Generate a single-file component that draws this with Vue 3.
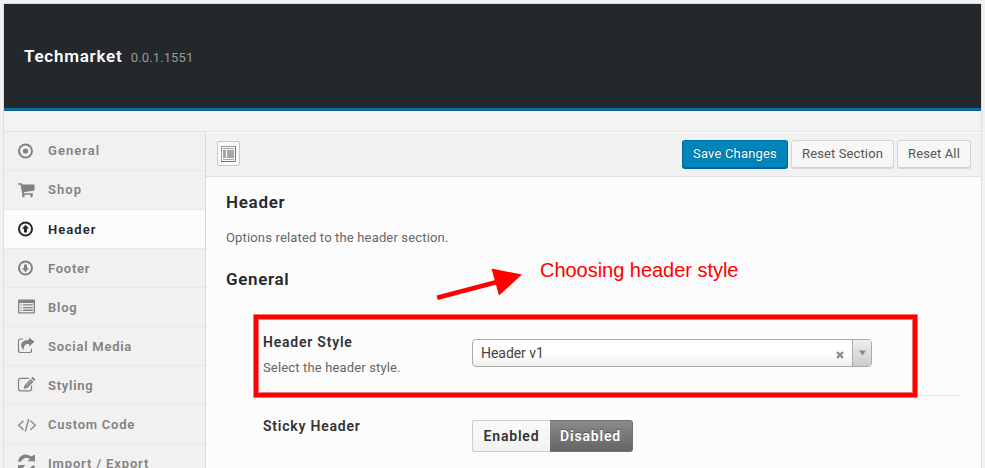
<script setup>
import { ref } from 'vue'

const items = ['General', 'Shop', 'Header', 'Footer', 'Blog', 'Social Media', 'Styling', 'Custom Code', 'Import / Export']
const active = ref('Header')
const sticky = ref(false)
</script>

<template>
  <div class="page">
    <div class="panel">
      <header class="top">
        <h2>Techmarket</h2>
        <span class="version">0.0.1.1551</span>
      </header>
      <div class="strip"></div>
      <div class="body">
        <nav class="sidebar">
          <a v-for="item in items" :key="item" class="item" :class="{ active: item === active }" @click="active = item">
            <svg class="icon" viewBox="0 0 20 20" width="20" height="20" fill="currentColor">
              <g v-if="item === 'General'">
                <circle cx="9.5" cy="10" r="6.5" fill="none" stroke="currentColor" stroke-width="2" />
                <circle cx="9.5" cy="10" r="2.6" />
              </g>
              <g v-else-if="item === 'Shop'">
                <path d="M2 3.3h3.8l.6 1.3h12.1v6L7.8 12.2l.3 1H17v1.4h-.4v2.6h-2.1v-2.4H8.500v2.4H6.3v-2.7L4.6 4.700H2z" />
              </g>
              <g v-else-if="item === 'Header'">
                <circle cx="9.5" cy="10" r="6.5" fill="none" stroke="currentColor" stroke-width="2" />
                <path d="M9.500 5.800l3.500 4h-2v3.700H8V9.800H6z" />
              </g>
              <g v-else-if="item === 'Footer'">
                <circle cx="9.5" cy="10" r="6.5" fill="none" stroke="currentColor" stroke-width="2" />
                <path d="M9.500 14.200l-3.500-4h2V6.500h3v3.700h2z" />
              </g>
              <g v-else-if="item === 'Blog'">
                <path fill-rule="evenodd" d="M3 2.500h15q1 0 1 1v12q0 1-1 1H3q-1 0-1-1v-12q0-1 1-1zM3.300 6v9.200h14.400V6z" />
                <path d="M4.500 7.200h1.200v1.300H4.500zM7 7.200h9.800v1.300H7zM4.500 9.900h1.200v1.300H4.500zM7 9.900h9.800v1.300H7zM4.500 12.600h1.200v1.300H4.500zM7 12.600h9.800v1.300H7z" />
              </g>
              <g v-else-if="item === 'Social Media'">
                <path d="M7 3H4.500Q2.500 3 2.500 5v9.500q0 2 2 2h9q2 0 2-2V12.500" fill="none" stroke="currentColor" stroke-width="1.200" />
                <path d="M13 1.500l5.500 4.300-5.500 4.600V7.900C9.500 7.800 7.500 9 7.600 14.300 2.500 8.500 6 3.800 13 4z" />
              </g>
              <g v-else-if="item === 'Styling'">
                <path d="M13 3.300H4.500q-2 0-2 2v8.500q0 2 2 2h9q2 0 2-2v-3.300" fill="none" stroke="currentColor" stroke-width="1.200" />
                <path d="M16.500 1.800l3 2.800-1.300 1.500-3-2.800zM14.500 4l3 2.800-6.300 6.200-3.500 1 .9-3.700z" />
                <path d="M10 10.800l5.300-5.300" stroke="#f1f1f1" stroke-width=".6" />
              </g>
              <g v-else-if="item === 'Custom Code'" fill="none" stroke="currentColor" stroke-width="1.300">
                <path d="M7.500 5.800L2.700 10.300l4.800 4.500M14.500 5.800l4.800 4.500-4.800 4.500M12.700 4L9.300 16.500" />
              </g>
              <g v-else>
                <path d="M2 7.700C3 2.900 6 .5 9.800 .5q3 0 5.200 2L19 .5v6.700h-7.500L14 5Q8.500 1.700 5 7.700z" />
                <path d="M19 11.800c-1 4.300-4 6.300-7.800 6.300q-3 0-5-1.700L2 18.500V11h7.500L7 13.500q5.500 4 9-1.700z" />
              </g>
            </svg>
            <span class="label">{{ item }}</span>
          </a>
        </nav>
        <main class="main">
          <div class="bar">
            <button class="expand" aria-label="Expand">
              <svg viewBox="0 0 15 16" width="15" height="16">
                <path d="M.5 16V.5H15" fill="none" stroke="#999" />
                <path d="M0 15.500h14.500V0" fill="none" stroke="#777" />
                <path d="M2 2h11v1H2zM2 4h3v8H2zM6 4h7v8H6zM2 13h11v1H2z" fill="#a7a7a7" />
              </svg>
            </button>
            <button class="btn primary">Save Changes</button>
            <button class="btn">Reset Section</button>
            <button class="btn">Reset All</button>
          </div>
          <section class="content">
            <h2 class="title">Header</h2>
            <p class="desc">Options related to the header section.</p>
            <h3 class="title general">General</h3>
            <div class="row first">
              <div class="field">
                <div class="name">Header Style</div>
                <div class="hint">Select the header style.</div>
              </div>
              <div class="select">
                <span class="value">Header v1</span>
                <svg class="clear" viewBox="0 0 8 8" width="8" height="8"><path d="M1 1l6 6M7 1L1 7" stroke="#888" stroke-width="2.300" /></svg>
                <span class="arrow"><svg viewBox="0 0 7 6" width="7" height="6"><path d="M0 .5h7L3.500 5.500z" fill="#888" /></svg></span>
              </div>
            </div>
            <div class="row">
              <div class="field"><div class="name sticky">Sticky Header</div></div>
              <div class="switch">
                <button class="opt left" :class="{ on: sticky }" @click="sticky = true">Enabled</button>
                <button class="opt right" :class="{ on: !sticky }" @click="sticky = false">Disabled</button>
              </div>
            </div>
          </section>
        </main>
      </div>
    </div>
    <div class="callout"></div>
    <svg class="pointer" viewBox="0 0 90 36" width="90" height="36">
      <path d="M2.200 29.800L62 14" stroke="#f00" stroke-width="4.800" />
      <path d="M56.500 0.500L87 6.500 64 27.500z" fill="#f00" />
    </svg>
    <div class="note">Choosing header style</div>
  </div>
</template>

<style>
body { margin: 0; background: #f1f1f1; overflow: hidden; }
</style>

<style scoped>
* { box-sizing: border-box; }
.page { position: relative; height: 468px; overflow: hidden; padding: 3px 3px 0; font-family: Roboto, "Liberation Sans", sans-serif; }
.panel { border: 1px solid #dedede; border-bottom: 0; height: 500px; background: #f3f3f3; }
.top { height: 107px; background: #23282d; border-bottom: 3px solid #0073aa; padding: 0 20px; display: flex; align-items: baseline; position: relative; }
.top::after { content: ""; position: absolute; left: 0; right: 0; bottom: -3px; height: 1px; background: #185b7c; }
h2, h3, p { margin: 0; }
.top h2 { color: #fff; font-size: 17px; font-weight: 600; line-height: 20px; margin-top: 42px; letter-spacing: .75px; }
.version { color: #999; font-size: 13px; letter-spacing: .1px; margin-left: 8.500px; }
.strip { height: 20px; }
.body { display: flex; border-top: 1px solid #e3e3e3; height: 380px; }
.sidebar { width: 202px; flex: none; background: #f1f1f1; border-right: 1px solid #d8d8d8; }
.item { display: flex; align-items: center; height: 39px; border-bottom: 1px solid #e7e7e7; padding-left: 12px; color: #828282; }
.item:nth-child(8) { height: 40px; }
.item.active { background: #fcfcfc; color: #23282d; }
.icon { flex: none; }
.label { margin-left: 12px; font-size: 13px; font-weight: 600; letter-spacing: .75px; line-height: 18px; white-space: pre; }
.item:nth-child(-n+3) .label { letter-spacing: 1.050px; }
.item:nth-child(n+3) .label { margin-top: 2px; }
.item:nth-child(8) .label { margin-top: 1px; }
.item:nth-child(9) .label { margin-top: -1px; letter-spacing: .85px; }
.main { flex: 1; background: #fcfcfc; }
.bar { height: 45px; border-top: 1px solid #fff; border-bottom: 1px solid #e1e1e1; background: #f2f2f2; display: flex; align-items: center; padding: 0 10px 2px 11px; gap: 3px; }
button { font-family: inherit; padding: 0; margin: 0; white-space: nowrap; }
.expand { width: 23px; height: 25px; border: 1px solid #c9c9c9; border-radius: 2px; background: #fafafa; display: flex; align-items: center; justify-content: center; margin-right: auto; }
.btn { height: 28px; border: 1px solid #d3d3d3; border-radius: 3px; background: #f7f7f7; box-shadow: 0 1px 0 #d4d4d4; color: #555; font-size: 13px; letter-spacing: .12px; width: 103px; padding-bottom: 1px; }
.btn:last-child { width: 74px; }
.btn.primary { width: 106px; background: #0085ba; border-color: #0073aa #006799 #006799; box-shadow: 0 1px 0 #006799; color: #fff; text-shadow: 0 -1px 1px #006799, 1px 0 1px #006799; letter-spacing: .18px; }
.content { padding: 15px 20px 0; }
.title { font-size: 17px; line-height: 20px; font-weight: 600; letter-spacing: .7px; color: #23282d; }
.desc { margin-top: 17px; font-size: 13px; line-height: 18px; color: #666; letter-spacing: .16px; }
.general { margin-top: 22px; letter-spacing: .65px; }
.row { display: flex; align-items: flex-start; margin-left: 37px; }
.first { height: 107px; border-bottom: 1px solid #e3e3e3; }
.field { width: 209px; flex: none; }
.name { margin-top: 43px; font-size: 14px; line-height: 20px; font-weight: 600; letter-spacing: .78px; color: #333; }
.name.sticky { margin-top: 20px; }
.hint { margin-top: 7px; font-size: 13px; line-height: 18px; color: #666; letter-spacing: .15px; }
.select { margin-top: 50px; width: 400px; height: 28px; border: 1px solid #aaa; border-radius: 4px; background: linear-gradient(#fff 50%, #eee); display: flex; align-items: center; overflow: hidden; }
.value { flex: 1; padding-left: 8px; font-size: 14px; color: #444; letter-spacing: -.05px; }
.clear { margin: 4px 8px 0 0; }
.arrow { width: 19px; height: 26px; border-left: 1px solid #aaa; background: linear-gradient(#eee, #ccc); display: flex; align-items: center; justify-content: center; }
.switch { margin-top: 24px; display: flex; }
.opt { height: 32px; width: 78px; font-size: 14px; font-weight: 600; letter-spacing: .8px; color: #333; border: 1px solid #ccc; border-right: 0; border-radius: 3px 0 0 3px; background: linear-gradient(#fafafa, #f2f2f2); }
.opt.right { width: 83px; border-radius: 0 3px 3px 0; padding-right: 1px; }
.opt.on { color: #fff; border: 1px solid #707070; border-left: 0; background: linear-gradient(#8a8a8a, #656565); text-shadow: 0 -1px 0 #555; }
.callout { position: absolute; left: 254px; top: 315px; width: 663px; height: 82px; border: 4px solid #f00; box-shadow: 0 0 0 1px rgba(255, 0, 0, .55), inset 0 0 0 1px rgba(255, 0, 0, .55); }
.pointer { position: absolute; left: 435px; top: 268px; }
.note { position: absolute; left: 540px; top: 258px; font: 20px/24px "Liberation Sans", sans-serif; letter-spacing: -.03px; color: #f00; white-space: nowrap; }
</style>
